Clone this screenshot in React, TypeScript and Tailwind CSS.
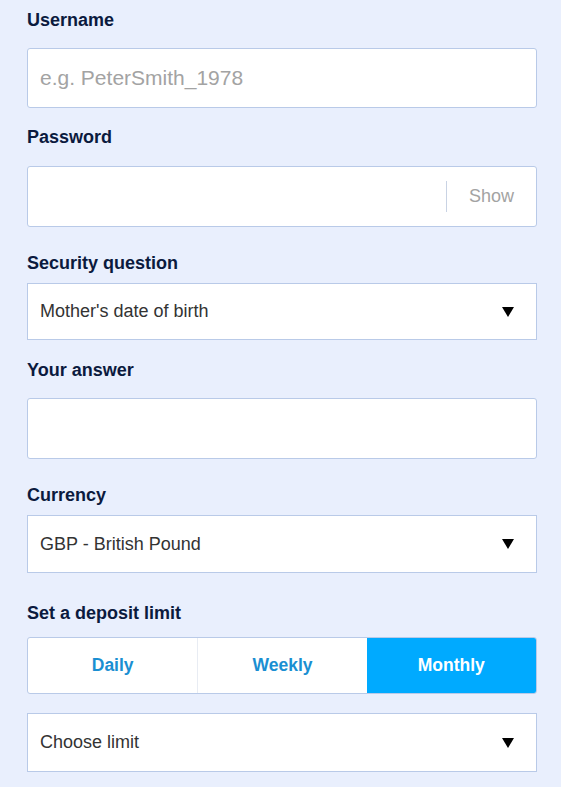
const SELECT_ARROW = (
  <svg width="12" height="10" viewBox="0 0 12 10" className="shrink-0">
    <path d="M0 0 H12 L6 10 Z" fill="#000" />
  </svg>
);

function Label({ children, className = '' }: { children: React.ReactNode; className?: string }) {
  return (
    <div className={`text-[18px] leading-5 font-bold text-[#0b1a3e] ${className}`}>
      {children}
    </div>
  );
}

function Select({ value, className = '' }: { value: string; className?: string }) {
  return (
    <div
      className={`flex items-center justify-between bg-white border border-[#b9cae8] pl-[12px] pr-[22px] text-[18px] text-[#333] ${className}`}
    >
      <span>{value}</span>
      {SELECT_ARROW}
    </div>
  );
}

export default function App() {
  const periods = ['Daily', 'Weekly', 'Monthly'];
  const active = 'Monthly';

  return (
    <div className="min-h-[787px] bg-[#e9effd] pl-[27px] pr-[24px] pt-[10px] font-['Liberation_Sans',Arial,sans-serif]">
      {/* Username */}
      <Label>Username</Label>
      <div className="mt-[18px] h-[60px] flex items-center bg-white border border-[#b9cae8] rounded-[3px] pl-[12px] text-[21px] text-[#a3a3a3]">
        e.g. PeterSmith_1978
      </div>

      {/* Password */}
      <Label className="mt-[19px]">Password</Label>
      <div className="mt-[19px] h-[61px] flex items-center bg-white border border-[#b9cae8] rounded-[3px]">
        <div className="flex-1" />
        <div className="w-px h-[31px] bg-[#c9d3e4]" />
        <div className="w-[89px] text-center text-[18px] text-[#a3a3a3]">Show</div>
      </div>

      {/* Security question */}
      <Label className="mt-[26px]">Security question</Label>
      <Select value="Mother's date of birth" className="mt-[10px] h-[57px]" />

      {/* Answer */}
      <Label className="mt-[20px]">Your answer</Label>
      <div className="mt-[18px] h-[61px] bg-white border border-[#b9cae8] rounded-[3px]" />

      {/* Currency */}
      <Label className="mt-[26px]">Currency</Label>
      <Select value="GBP - British Pound" className="mt-[10px] h-[58px]" />

      {/* Deposit limit */}
      <Label className="mt-[30px]">Set a deposit limit</Label>
      <div className="mt-[14px] h-[57px] grid grid-cols-3 bg-white border border-[#b9cae8] rounded-[3px] overflow-hidden">
        {periods.map((p, i) => (
          <div
            key={p}
            className={`flex items-center justify-center text-[17.5px] font-bold ${
              p === active ? 'bg-[#00aaff] text-white' : 'text-[#1a8fd2]'
            } ${i === 1 ? 'border-l border-[#e8ecf3]' : ''}`}
          >
            {p}
          </div>
        ))}
      </div>

      <Select value="Choose limit" className="mt-[19px] h-[59px]" />
    </div>
  );
}
